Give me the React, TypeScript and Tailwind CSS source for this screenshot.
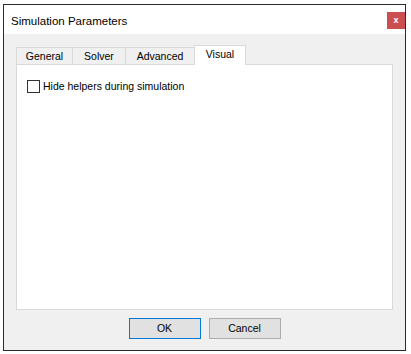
export default function App() {
  const tabs = [
    { label: "General", w: 57 },
    { label: "Solver", w: 54 },
    { label: "Advanced", w: 70 },
  ];
  return (
    <div
      className="w-[411px] h-[354px] bg-white pl-[3px] pt-[4px] text-black"
      style={{ fontFamily: '"Liberation Sans", Arial, sans-serif' }}
    >
      <div className="w-[403px] h-[347px] border border-[#2b2b2b] flex flex-col bg-[#f0f0f0]">
        <div className="h-[29px] bg-white flex items-start justify-between">
          <div className="pl-[7px] pt-[9px] text-[11.5px] leading-[14px]">Simulation Parameters</div>
          <div className="mt-[7px] w-[18px] h-[17px] bg-[#cc4f4f] flex items-center justify-center text-white text-[9px] font-bold leading-none">
            x
          </div>
        </div>
        <div className="flex-1 flex flex-col pl-[12px] pr-[12px]">
          <div className="flex items-end h-[30px]">
            {tabs.map((t, i) => (
              <div
                key={t.label}
                className={
                  "h-[17px] border border-b-0 border-[#d9d9d9] bg-[#f0f0f0] flex items-center justify-center text-[10.5px] leading-none pt-[1px] " +
                  (i > 0 ? "-ml-px" : "")
                }
                style={{ width: t.w }}
              >
                {t.label}
              </div>
            ))}
            <div className="relative z-10 -ml-px w-[52px] h-[20px] -mb-px border border-b-0 border-[#d9d9d9] bg-white flex items-center justify-center text-[10.5px] leading-none pb-[2px]">
              Visual
            </div>
          </div>
          <div className="w-[377px] h-[246px] border border-[#d9d9d9] bg-white pl-[10px] pt-[15px]">
            <div className="flex items-center gap-[3px]">
              <div className="w-[13px] h-[13px] border border-[#333333] bg-white" />
              <span className="text-[10.5px] leading-none">Hide helpers during simulation</span>
            </div>
          </div>
          <div className="flex justify-center gap-[8px] mt-[8px]">
            <div className="w-[72px] h-[21px] border border-[#0078d7] bg-[#e1e1e1] flex items-center justify-center text-[10.5px] leading-none">
              OK
            </div>
            <div className="w-[72px] h-[21px] border border-[#adadad] bg-[#e1e1e1] flex items-center justify-center text-[10.5px] leading-none">
              Cancel
            </div>
          </div>
        </div>
      </div>
    </div>
  );
}
